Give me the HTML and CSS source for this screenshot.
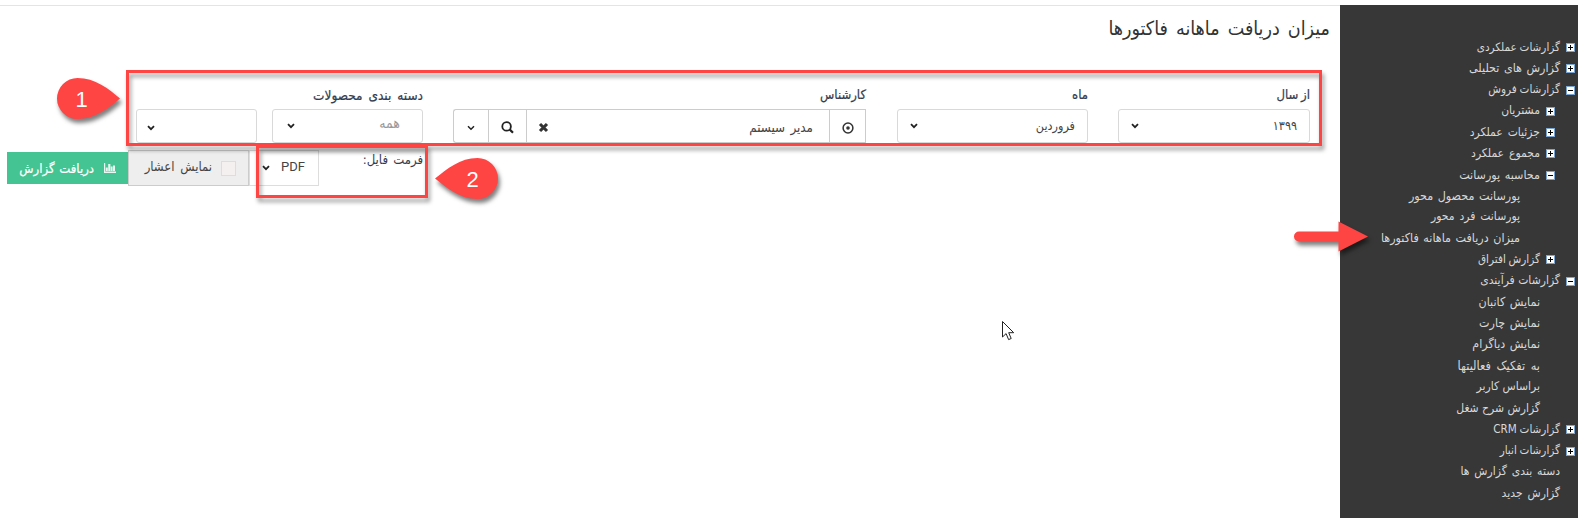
FILE: index.html
```html
<!DOCTYPE html>
<html lang="fa" dir="rtl">
<head>
<meta charset="utf-8">
<title>میزان دریافت ماهانه فاکتورها</title>
<link rel="stylesheet" href="styles.css">
</head>
<body>
<div class="page">
  <nav class="sidebar">
    <ul class="tree">
      <li class="tight"><i class="toggle"></i><span>گزارشات عملکردی</span></li>
      <li class="wide"><i class="toggle"></i><span>گزارش های تحلیلی</span></li>
      <li class="tight"><i class="toggle open"></i><span>گزارشات فروش</span></li>
      <li class="sub"><i class="toggle"></i><span>مشتریان</span></li>
      <li class="sub"><i class="toggle"></i><span>جزئیات عملکرد</span></li>
      <li class="sub"><i class="toggle"></i><span>مجموع عملکرد</span></li>
      <li class="sub wide"><i class="toggle open"></i><span>محاسبه پورسانت</span></li>
      <li class="leaf deep wide"><span>پورسانت محصول محور</span></li>
      <li class="leaf deep"><span>پورسانت فرد محور</span></li>
      <li class="leaf deep wide"><span>میزان دریافت ماهانه فاکتورها</span></li>
      <li class="sub tight"><i class="toggle"></i><span>گزارش افتراق</span></li>
      <li class="even"><i class="toggle open"></i><span>گزارشات فرآیندی</span></li>
      <li class="leaf mid wide"><span>نمایش کانبان</span></li>
      <li class="leaf mid wide"><span>نمایش چارت</span></li>
      <li class="leaf mid wide"><span>نمایش دیاگرام</span></li>
      <li class="leaf mid wider"><span>به تفکیک فعالیتها</span></li>
      <li class="leaf mid even"><span>براساس کاربر</span></li>
      <li class="leaf mid even"><span>گزارش شرح شغل</span></li>
      <li class="tight"><i class="toggle"></i><span>گزارشات CRM</span></li>
      <li class="tight"><i class="toggle"></i><span>گزارشات انبار</span></li>
      <li class="leaf"><span>دسته بندی گزارش ها</span></li>
      <li class="leaf"><span>گزارش جدید</span></li>
    </ul>
  </nav>
  <main class="main">
    <h1 class="title">میزان دریافت ماهانه فاکتورها</h1>
    <div class="filters">
      <div class="field year"><label>از سال</label>
        <div class="select"><span>۱۳۹۹</span><svg class="chev" viewBox="0 0 8 6"><path d="M1 1.2 4 4.2 7 1.2"/></svg></div></div>
      <div class="field month"><label>ماه</label>
        <div class="select"><span>فروردین</span><svg class="chev" viewBox="0 0 8 6"><path d="M1 1.2 4 4.2 7 1.2"/></svg></div></div>
      <div class="field expert"><label>کارشناس</label>
        <div class="group">
          <div class="cell target"><svg width="12" height="12" viewBox="0 0 12 12"><circle cx="6" cy="6" r="4.9" fill="none" stroke="#333" stroke-width="1.5"/><circle cx="6" cy="6" r="1.8" fill="#333"/></svg></div>
          <div class="cell value"><span>مدیر سیستم</span><svg width="11" height="11" viewBox="0 0 11 11"><path d="M2 2 9 9M9 2 2 9" stroke="#333" stroke-width="3.1"/></svg></div>
          <div class="cell search"><svg width="13" height="13" viewBox="0 0 13 13"><circle cx="5.6" cy="5.4" r="4.3" fill="none" stroke="#222" stroke-width="1.8"/><path d="m8.6 8.4 3.4 3.4" stroke="#222" stroke-width="2.2"/></svg></div>
          <div class="cell more"><svg class="chev thin" viewBox="0 0 8 6"><path d="M1 1.2 4 4.2 7 1.2"/></svg></div>
        </div></div>
      <div class="field category"><label>دسته بندی محصولات</label>
        <div class="select muted"><span>همه</span><svg class="chev" viewBox="0 0 8 6"><path d="M1 1.2 4 4.2 7 1.2"/></svg></div></div>
      <div class="field extra"><div class="select"><span></span><svg class="chev" viewBox="0 0 8 6"><path d="M1 1.2 4 4.2 7 1.2"/></svg></div></div>
    </div>
    <div class="actions">
      <label class="format-label">فرمت فایل:</label>
      <div class="format"><span>PDF</span><svg class="chev" viewBox="0 0 8 6"><path d="M1 1.2 4 4.2 7 1.2"/></svg></div>
      <div class="decimals"><i class="checkbox"></i><span>نمایش اعشار</span></div>
      <div class="report"><svg width="12" height="10" viewBox="0 0 12 10" fill="#e8f7f1"><path d="M0 0h1.200v8.600H12V10H0zM1.800 4.500h2v3.600h-2zM4.200 1h2.200v7.100H4.200zM6.800 3.500h1.800v4.600H6.800zM9 2.500h2v5.600H9z"/></svg><span>دریافت گزارش</span></div>
    </div>
  </main>
</div>
<div class="mark box-one"></div>
<div class="mark box-two"></div>
<svg class="overlay" width="1578" height="518" viewBox="0 0 1578 518">
  <g class="pin">
    <path d="M120 98.500C109 89 95 78 77.500 78a20.500 20.500 0 0 0 0 41C95 119 109 108 120 98.500z"/>
    <path d="M435 178.500C447 169 460 158 477.500 158a20.500 20.500 0 0 1 0 41C460 199 447 188 435 178.500z"/>
    <path d="M1299 231.500h39.500v-10l29.500 15-29.500 15v-10H1299a5 5 0 0 1 0-10z"/>
  </g>
  <text class="num" x="81.500" y="106.500">1</text>
  <text class="num" x="472.500" y="186.500">2</text>
  <path d="M1002.500 321.500v15.500l3.600-3.400 2.500 6 2.600-1.100-2.500-5.800h5z" fill="#fff" stroke="#222" stroke-width="1"/>
</svg>
</body>
</html>
```
FILE: styles.css
```css
* { box-sizing: border-box; }
body { margin: 0; background: #fff; font-family: "DejaVu Sans Condensed", "DejaVu Sans", sans-serif; font-size: 12px; color: #444; overflow: hidden; }
.page { display: flex; height: 518px; padding-top: 5px; }
.sidebar { width: 238px; background: #373737; padding: 31px 3px 0 0; }
.tree { list-style: none; margin: 0; padding: 0; }
.tree li { display: flex; align-items: center; gap: 6px; height: 21.24px; color: #d8d8d8; white-space: nowrap; word-spacing: 1.5px; }
.tree .tight { font-size: 11.6px; word-spacing: -0.5px; }
.tree .even { word-spacing: 0; }
.tree .wide { font-size: 12.4px; word-spacing: 1px; }
.tree .wider { font-size: 12.6px; word-spacing: 2px; }
.tree .sub { padding-right: 20px; }
.tree .leaf { padding-right: 15px; }
.tree .mid { padding-right: 35px; }
.tree .deep { padding-right: 55px; }
.toggle { width: 9px; height: 9px; margin-top: 2px; border: 1px solid #7ba4d0; background: linear-gradient(#000, #000) center / 5px 1px no-repeat, linear-gradient(#000, #000) center / 1px 5px no-repeat, #fff; }
.toggle.open { background: linear-gradient(#000, #000) center / 5px 1px no-repeat, #fff; }
.main { flex: 1; border-top: 1px solid #e4e4e4; }
.title { margin: 9px 10px 0 0; height: 28px; line-height: 28px; font-size: 19.5px; word-spacing: 2.5px; font-weight: 400; color: #333; }
.filters { display: flex; align-items: flex-end; margin-top: 42px; padding-right: 30px; height: 58px; }
.field label { display: block; height: 24px; line-height: 20px; font-size: 13px; color: #333c50; white-space: nowrap; -webkit-text-stroke: 0.2px #333c50; }
.year label { word-spacing: -1px; }
.category label { font-size: 13.5px; word-spacing: 2px; }
.select { display: flex; justify-content: space-between; height: 34px; padding: 0 12px 2px; line-height: 27px; border: 1px solid #d9d9d9; border-radius: 3px; align-items: center; font-size: 12.5px; }
.chev { width: 8px; height: 6px; fill: none; stroke: #222; stroke-width: 1.800; }
.select .chev { margin-top: 1px; }
.thin { stroke-width: 1.500; }
.year { width: 192px; }
.month { width: 191px; margin-right: 30px; }
.expert { width: 413px; margin-right: 31px; }
.category { width: 151px; margin-right: 30px; }
.extra { width: 121px; margin-right: 15px; }
.extra .select { padding-left: 10px; padding-top: 2px; padding-bottom: 0; }
.category .select { padding-left: 14px; padding-right: 22px; }
.muted span { color: #999; font-size: 14px; margin-top: -4px; }
.group { display: flex; height: 34px; }
.cell { display: flex; align-items: center; justify-content: center; border: 1px solid #ccc; padding-top: 3px; }
.target { width: 37px; }
.value { width: 302px; justify-content: space-between; padding-right: 16px; padding-left: 11px; border-width: 1px 0; font-size: 13.3px; word-spacing: 1.5px; }
.search { width: 39px; }
.more { width: 35px; border-right: 0; border-radius: 3px 0 0 3px; }
.actions { display: flex; padding-right: 917px; margin-top: 7px; }
.format-label { width: 104px; height: 20px; line-height: 20px; font-size: 13px; word-spacing: 1.5px; color: #333c50; }
.format { display: flex; justify-content: space-between; align-items: center; width: 70px; height: 36px; padding: 0 13px 3px 12px; border: 1px solid #ddd; font-family: Roboto, sans-serif; font-size: 13px; }
.format .chev { margin-top: 3px; }
.decimals { display: flex; align-items: center; gap: 9px; width: 121px; height: 36px; padding-right: 12px; background: #eee; border: 1px solid #ccc; font-size: 13px; word-spacing: 2px; white-space: nowrap; }
.decimals span { margin-top: -3px; }
.checkbox { width: 15px; height: 15px; border: 1px solid #ddd; background: #f5f0f0; }
.report { display: flex; align-items: center; gap: 10px; width: 121px; height: 32px; margin-top: 2px; padding-right: 12px; background: #44c492; color: #fff; white-space: nowrap; font-size: 13px; word-spacing: 1px; -webkit-text-stroke: 0.2px #fff; }
.mark { position: absolute; border: 3px solid #ff4444; filter: drop-shadow(2px 4px 2px rgba(0,0,0,.4)); }
.box-one { left: 126px; top: 70px; width: 1196px; height: 76px; }
.box-two { left: 256px; top: 145px; width: 172px; height: 53px; }
.overlay { position: absolute; left: 0; top: 0; }
.pin { fill: #ff4444; filter: drop-shadow(2px 4px 2px rgba(0,0,0,.5)); }
.num { fill: #fff; font: 22px "Liberation Sans", sans-serif; text-anchor: middle; direction: ltr; }
```
